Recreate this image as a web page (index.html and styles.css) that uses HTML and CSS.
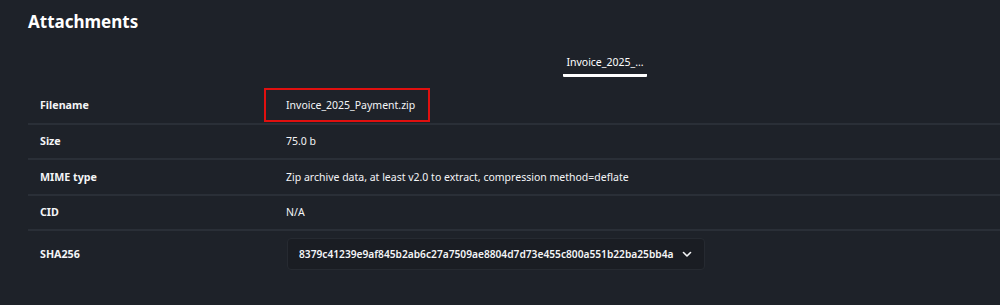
FILE: index.html
```html
<!DOCTYPE html>
<html>
<head>
    <title>Attachments</title>
    <link rel="stylesheet" href="styles.css">
</head>
<body>
    <section class="panel">
        <h1>Attachments</h1>

        <div class="tabs">
            <a href="#" class="tab active">Invoice_2025_...</a>
        </div>

        <table class="details">
            <tbody>
                <tr>
                    <th>Filename</th>
                    <td><span class="highlight">Invoice_2025_Payment.zip</span></td>
                </tr>
                <tr>
                    <th>Size</th>
                    <td>75.0 b</td>
                </tr>
                <tr>
                    <th>MIME type</th>
                    <td>Zip archive data, at least v2.0 to extract, compression method=deflate</td>
                </tr>
                <tr>
                    <th>CID</th>
                    <td>N/A</td>
                </tr>
                <tr class="last">
                    <th>SHA256</th>
                    <td>
                        <div class="hash">
                            <span>8379c41239e9af845b2ab6c27a7509ae8804d7d73e455c800a551b22ba25bb4a</span>
                            <svg width="12" height="12" viewBox="0 0 12 12" fill="none" stroke="currentColor" stroke-width="1.6" stroke-linecap="round" stroke-linejoin="round"><path d="M2.5 4.5 6 8l3.5-3.5"/></svg>
                        </div>
                    </td>
                </tr>
            </tbody>
        </table>
    </section>
</body>
</html>
```

FILE: styles.css
```css
:root {
    --bg: #1e2229;
    --text: #f4f5f7;
    --line: #2a2f37;
    --box-bg: #1a1d23;
    --box-border: #262a31;
    --red: #e0100f;
}

* {
    margin: 0;
    padding: 0;
    box-sizing: border-box;
}

body {
    font-family: 'Noto Sans', 'Open Sans', sans-serif;
    background-color: var(--bg);
    color: var(--text);
    font-size: 10.5px;
}

.panel {
    padding: 9px 0 0 28px;
}

h1 {
    font-size: 17px;
    font-weight: 700;
    line-height: 26px;
    color: #fff;
}

.tabs {
    display: flex;
    justify-content: center;
    margin-top: 19px;
    padding-left: 182px;
}

.tab {
    color: #fff;
    text-decoration: none;
    font-size: 10.5px;
    line-height: 16px;
    padding: 0 3px 4px;
    border-bottom: 3px solid #fff;
    border-radius: 1px;
}

.details {
    width: 100%;
    border-collapse: collapse;
    margin-top: 11px;
}

.details th,
.details td {
    text-align: left;
    height: 35.5px;
    vertical-align: middle;
    border-bottom: 2px solid var(--line);
}

.details th {
    width: 258px;
    padding-left: 12px;
    font-size: 10.7px;
    font-weight: 700;
}

.details tr.last th,
.details tr.last td {
    border-bottom: none;
    height: 46px;
}

.highlight {
    display: inline-block;
    margin-left: -22px;
    padding: 8px 14px 8px 20px;
    border: 2px solid var(--red);
    width: 166px;
}

.hash {
    display: inline-flex;
    align-items: center;
    gap: 8px;
    margin-left: 1px;
    padding: 8px 11px 8px 11px;
    background: var(--box-bg);
    border: 1px solid var(--box-border);
    border-radius: 4px;
    font-size: 10.2px;
    font-weight: 600;
}

.hash svg {
    display: block;
}
```
